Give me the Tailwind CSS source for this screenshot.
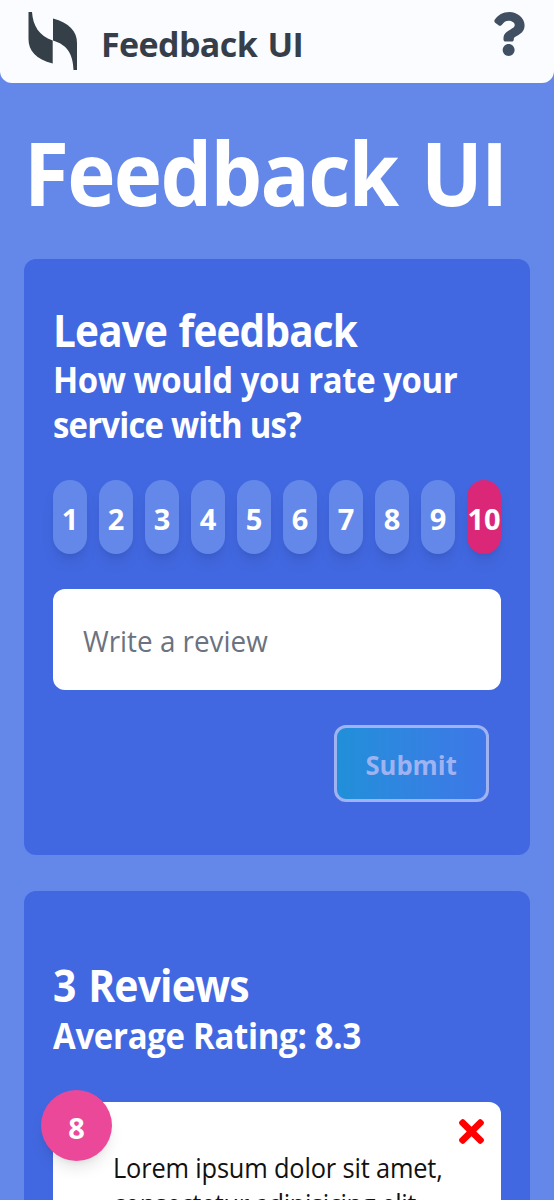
<!DOCTYPE html>
<html lang="en">
<head>
<meta charset="utf-8">
<meta name="viewport" content="width=device-width, initial-scale=1">
<title>Feedback UI</title>
<script src="https://cdn.jsdelivr.net/npm/@tailwindcss/browser@4"></script>
</head>
<body class="h-[1200px] overflow-hidden bg-[#6488e9] font-['Open_Sans','Noto_Sans',sans-serif] text-white">
<header class="flex h-[83px] items-start justify-between rounded-b-[12px] bg-[#fafcff] pl-[28px] pr-[29px]">
  <div class="flex text-[#363f49]">
    <svg class="mt-[12px] h-[58px] w-[50px]" viewBox="0 0 50 58" fill="#343f47"><path d="M.5 0H4C5 14 11 23.500 24.700 28.500V51.500C8 47 .5 39 .5 27Z"/><path d="M25 6.500C41 11 49 19 49 31V58H45.500C45 43 40 33 25 28.500Z"/></svg>
    <span class="ml-[23px] mt-[19px] whitespace-nowrap text-[34px] font-bold leading-[50px] tracking-[-0.6px] [word-spacing:2px]">Feedback UI</span>
  </div>
  <svg class="mt-[12px] h-[44px] w-[31px]" viewBox="22 0 360 512" fill="#414f63"><path d="M202.021 0C122.202 0 70.503 32.703 29.914 91.026c-7.363 10.58-5.093 25.086 5.178 32.874l43.138 32.709c10.373 7.865 25.132 6.026 33.253-4.148 25.049-31.381 43.63-49.449 82.757-49.449 30.764 0 68.816 19.799 68.816 49.631 0 22.552-18.617 34.134-48.993 51.164-35.423 19.86-82.299 44.576-82.299 106.405V320c0 13.255 10.745 24 24 24h72.471c13.255 0 24-10.745 24-24v-5.773c0-42.86 125.268-44.645 125.268-160.627C377.504 66.256 286.902 0 202.021 0zM192 373.459c-38.196 0-69.271 31.075-69.271 69.271 0 38.195 31.075 69.27 69.271 69.27s69.271-31.075 69.271-69.271-31.075-69.27-69.271-69.27z"/></svg>
</header>
<main class="px-6">
  <h1 class="mt-[29px] origin-left scale-x-[.94] whitespace-nowrap text-[87px] font-bold leading-[120px] tracking-[-1.8px] [word-spacing:4px]">Feedback UI</h1>
  <section class="mt-[27px] h-[596px] rounded-[12px] bg-[#4268e1] px-[29px] pt-[43px]">
    <h2 class="origin-left scale-x-[.92] whitespace-nowrap text-[44px] font-bold leading-[56px] tracking-[-0.9px] [word-spacing:2px]">Leave feedback</h2>
    <p class="origin-left scale-x-[.94] whitespace-nowrap text-[35px] font-bold leading-[44.5px]"><span class="tracking-[-0.44px]">How would you rate your</span><br><span class="tracking-[-0.85px]">service with us?</span></p>
    <div class="mt-[33px] grid grid-cols-10 gap-x-[12px] text-center text-[29px] font-bold leading-[77px]">
      <span class="h-[74px] rounded-full bg-[#6488e9] shadow-lg">1</span>
      <span class="h-[74px] rounded-full bg-[#6488e9] shadow-lg">2</span>
      <span class="h-[74px] rounded-full bg-[#6488e9] shadow-lg">3</span>
      <span class="h-[74px] rounded-full bg-[#6488e9] shadow-lg">4</span>
      <span class="h-[74px] rounded-full bg-[#6488e9] shadow-lg">5</span>
      <span class="h-[74px] rounded-full bg-[#6488e9] shadow-lg">6</span>
      <span class="h-[74px] rounded-full bg-[#6488e9] shadow-lg">7</span>
      <span class="h-[74px] rounded-full bg-[#6488e9] shadow-lg">8</span>
      <span class="h-[74px] rounded-full bg-[#6488e9] shadow-lg">9</span>
      <span class="h-[74px] rounded-full bg-[#db2777] shadow-lg">10</span>
    </div>
    <div class="mt-[35px] h-[101px] rounded-[12px] bg-white pl-[30px] text-[29px] leading-[104px] text-[#6b7280]"><span class="inline-block origin-left scale-x-[.96]">Write a review</span></div>
    <div class="mt-[35px] flex justify-end pr-[12px]">
      <button class="h-[77px] w-[155px] rounded-[12px] border-3 border-[#9fb2f1] bg-linear-to-r from-[#1f90d9] to-[#3e76e8] bg-origin-border text-[27px] font-bold leading-[73px] text-[#9fb2f1]"><span class="inline-block scale-x-[.95]">Submit</span></button>
    </div>
  </section>
  <section class="mt-[36px] h-[309px] overflow-hidden rounded-t-[12px] bg-[#4268e1] px-[29px] pt-[67px]">
    <h2 class="origin-left scale-x-[.93] whitespace-nowrap text-[44px] font-bold leading-[54px] tracking-[-0.9px] [word-spacing:3px]">3 Reviews</h2>
    <p class="mt-[2px] origin-left scale-x-[.94] whitespace-nowrap text-[35px] font-bold leading-[44.5px] tracking-[-0.3px]">Average Rating: 8.3</p>
    <article class="relative mt-[43.500px] h-[240px] rounded-[12px] bg-white pl-[60px] pt-[48px] text-[27px] leading-[36px] text-[#111]">
      <span class="absolute -left-[12px] -top-[12px] size-[71px] rounded-full bg-[#ec4899] text-center text-[29px] font-bold leading-[76px] text-white shadow-lg">8</span>
      <svg class="absolute right-[17px] top-[17px] size-[25px]" viewBox="0 80 352 352" fill="#f00"><path d="M242.72 256l100.07-100.07c12.28-12.28 12.28-32.19 0-44.48l-22.24-22.24c-12.28-12.28-32.19-12.28-44.48 0L176 189.280 75.930 89.210c-12.28-12.28-32.19-12.28-44.48 0L9.210 111.450c-12.28 12.28-12.28 32.19 0 44.480L109.280 256 9.210 356.070c-12.28 12.28-12.28 32.19 0 44.480l22.240 22.240c12.28 12.28 32.2 12.28 44.480 0L176 322.720l100.070 100.070c12.28 12.28 32.2 12.28 44.480 0l22.240-22.240c12.28-12.28 12.28-32.19 0-44.480L242.720 256z"/></svg>
      <p class="origin-left scale-x-[.94] whitespace-nowrap"><span class="tracking-[-0.17px]">Lorem ipsum dolor sit amet,</span><br><span class="tracking-[-0.4px]">consectetur adipisicing elit.</span></p>
    </article>
  </section>
</main>
</body>
</html>
